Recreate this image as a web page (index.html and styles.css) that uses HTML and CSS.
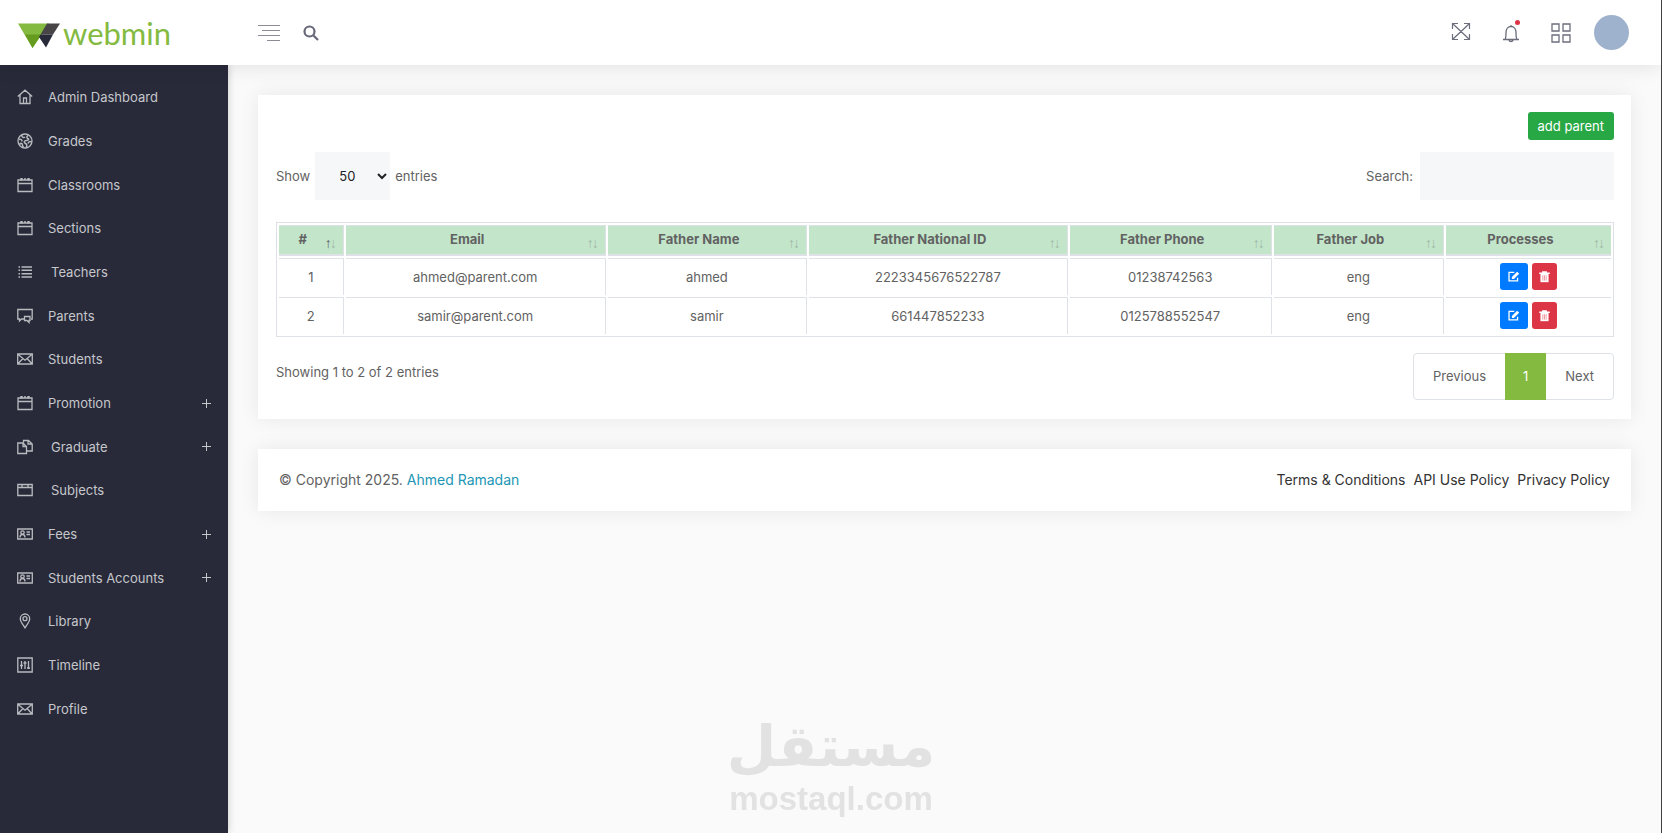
FILE: index.html
```
<!DOCTYPE html>
<html lang="en">
<head>
    <meta charset="UTF-8">
    <meta name="viewport" content="width=device-width, initial-scale=1.0">
    <title>Parents</title>
    <link rel="stylesheet" href="styles.css">
</head>
<body>
    <!-- icons shared by several items -->
    <svg class="sprite" aria-hidden="true">
        <symbol id="calendar" viewBox="0 0 16 16"><path d="M1 3h14v11.500H1zM1 6.500h14"/><path d="M4.500 1v2.500M11.500 1v2.500" stroke-width="2.400"/><path d="M7 2h2"/></symbol>
        <symbol id="envelope" viewBox="0 0 16 16"><path d="M.7 3h14.600v10H.7zM1.500 3.800l6.500 5.400 6.500-5.400M1.500 12.300l4.200-4.500M14.500 12.300l-4.200-4.500"/></symbol>
        <symbol id="idcard" viewBox="0 0 16 16"><path d="M.7 3h14.600v10H.7z"/><circle cx="5.500" cy="6.500" r="1.700"/><path d="M3 11.500c0-2 1-3 2.500-3s2.500 1 2.500 3M9.500 6H13M9.500 8.500H13"/></symbol>
        <symbol id="edit" viewBox="0 0 16 16"><path d="M9 3H2.500v10.500h10.500V9.500" fill="none" stroke="currentColor" stroke-width="1.600"/><path d="M6 11V8.500l6.500-6.500 2.500 2.500-6.500 6.500z"/></symbol>
        <symbol id="trash" viewBox="0 0 16 16"><path d="M1.500 3H5V1.500h6V3h3.500v1.800h-13z"/><path d="M3 4.500h10V15H3z"/><path d="M6 6.500v6.500M8 6.500v6.500M10 6.500v6.500" stroke="#e87883" stroke-width=".9"/></symbol>
    </svg>

    <header class="header">
        <a href="#" class="logo">
            <svg width="42" height="25" viewBox="0 0 42 25" aria-hidden="true">
                <path d="M0 .5h31L14.500 25z" fill="#84ba3f"/>
                <path d="M7 11.500h16.500L14.500 25z" fill="#659b1f"/>
                <path d="M29 .5h13L35 11.500H22.500z" fill="#484547"/>
                <path d="M22.500 11.500H35L28 24.500 21 14z" fill="#282a3a"/>
            </svg>
            <span>webmin</span>
        </a>
        <button type="button" class="icon-btn toggle" aria-label="Toggle menu">
            <svg width="22" height="18" viewBox="0 0 22 18" stroke="#8c8d94"><path d="M0 1.500h22M4 6.500h18M0 11.500h22M9 16.500h13"/></svg>
        </button>
        <button type="button" class="icon-btn" aria-label="Search">
            <svg width="16" height="16" viewBox="0 0 16 16" fill="none" stroke="#666779" stroke-width="2.200"><circle cx="6.500" cy="6.500" r="5"/><path d="M10.500 10.500l4.500 4.500"/></svg>
        </button>
        <div class="header-right">
            <button type="button" class="icon-btn" aria-label="Full screen">
                <svg width="20" height="20" viewBox="0 0 20 20" fill="none" stroke="#6c6e7c" stroke-width="1.200"><path d="M1.500 .500l17 16M18.500 .500l-17 16M1.500 6V.500H7M13 .500h5.500V6M18.500 11v5.500H13M7 16.500H1.500V11"/></svg>
            </button>
            <button type="button" class="icon-btn" aria-label="Notifications">
                <svg width="20" height="20" viewBox="0 0 20 20" fill="none" stroke="#6c6e7c" stroke-width="1.300"><path d="M2 16.500h16M4 16.500c1-1.500 1-3 1-7 0-3.500 2-6 5-6s5 2.500 5 6c0 4 0 5.500 1 7M10 2v1.500M8 17c.5 2 3.500 2 4 0"/></svg>
                <span class="dot"></span>
            </button>
            <button type="button" class="icon-btn" aria-label="Apps">
                <svg width="20" height="20" viewBox="0 0 20 20" fill="none" stroke="#6c6e7c" stroke-width="1.300"><path d="M1 1h7v7H1zM12 1h7v7h-7zM1 12h7v7H1zM12 12h7v7h-7z"/></svg>
            </button>
            <button type="button" class="avatar" aria-label="Account"></button>
        </div>
    </header>

    <div class="wrapper">
        <nav class="sidebar">
            <ul class="menu">
                <li><a href="#"><svg viewBox="0 0 16 16"><path d="M.8 7.500L8 1.200l7.200 6.300M3 6v8.500h10V6M6.500 14.500V9h3v5.500"/></svg>Admin Dashboard</a></li>
                <li><a href="#"><svg viewBox="0 0 16 16"><circle cx="8" cy="8" r="7"/><path d="M5 2c-.5 2.500 2 3 3 2M2 6.500c2-.5 3 0 3 2M11 2.500c-2 1-1 3 0 3s1 2-1.500 2-3 2-1 3 1.500 3 .5 4M14.500 9c-2-1-3 0-3.500 1.500M2.500 11.500c1-2 3-1 3 .5s1 2 1 2.500" stroke-width="1.500"/></svg>Grades</a></li>
                <li><a href="#"><svg><use href="#calendar"/></svg>Classrooms</a></li>
                <li><a href="#"><svg><use href="#calendar"/></svg>Sections</a></li>
                <li><a href="#" class="indent"><svg viewBox="0 0 16 16"><path d="M4.500 3H15M4.500 6.300H15M4.500 9.700H15M4.500 13H15M1.500 3h1.500M1.500 6.300h1.500M1.500 9.700h1.500M1.500 13h1.500" stroke-width="1.500"/></svg>Teachers</a></li>
                <li><a href="#"><svg viewBox="0 0 16 16"><path d="M7 11H4.500L2.500 13v-2H.8V1.500h14.400V11H14M7.500 8.500h5.500v4h-1v2l-2-2H7.500z"/></svg>Parents</a></li>
                <li><a href="#"><svg><use href="#envelope"/></svg>Students</a></li>
                <li><a href="#"><svg><use href="#calendar"/></svg>Promotion<span class="plus"></span></a></li>
                <li><a href="#" class="indent"><svg viewBox="0 0 16 16"><path d="M.8 4H6l3.500 3.500v7H.8zM6 4v3.500h3.500M6.500 3.500v-2h5L15.200 5v7H10M11 1.500V5h4"/></svg>Graduate<span class="plus"></span></a></li>
                <li><a href="#" class="indent"><svg viewBox="0 0 16 16"><path d="M.8 2.500h14.400v11H.8zM.8 5.500h14.400M5 2.500v3M11 2.500v3"/></svg>Subjects</a></li>
                <li><a href="#"><svg><use href="#idcard"/></svg>Fees<span class="plus"></span></a></li>
                <li><a href="#"><svg><use href="#idcard"/></svg>Students Accounts<span class="plus"></span></a></li>
                <li><a href="#"><svg viewBox="0 0 16 16"><path d="M8 14.800C5.500 11 3.300 8.500 3.300 5.700a4.700 4.700 0 0 1 9.400 0C12.700 8.500 10.500 11 8 14.800z"/><circle cx="8" cy="5.700" r="2"/></svg>Library</a></li>
                <li><a href="#"><svg viewBox="0 0 16 16"><path d="M.8 1h14.400v14H.8zM4.500 4v8M8 4v8M11.500 4v8M3 8.500h3M6.500 6h3M10 11h3"/></svg>Timeline</a></li>
                <li><a href="#"><svg><use href="#envelope"/></svg>Profile</a></li>
            </ul>
        </nav>

        <main class="content">
            <section class="card">
                <div class="card-top">
                    <button type="button" class="btn btn-success">add parent</button>
                </div>
                <div class="table-tools">
                    <label>Show
                        <select>
                            <option>10</option>
                            <option>25</option>
                            <option selected>50</option>
                            <option>100</option>
                        </select>
                        entries</label>
                    <label class="search">Search: <input type="search"></label>
                </div>
                <table class="table">
                    <colgroup>
                        <col class="col-id">
                        <col class="col-email">
                        <col class="col-name">
                        <col class="col-national">
                        <col class="col-phone">
                        <col class="col-job">
                        <col class="col-processes">
                    </colgroup>
                    <thead>
                        <tr>
                            <th class="asc">#</th>
                            <th>Email</th>
                            <th>Father Name</th>
                            <th>Father National ID</th>
                            <th>Father Phone</th>
                            <th>Father Job</th>
                            <th>Processes</th>
                        </tr>
                    </thead>
                    <tbody>
                        <tr>
                            <td>1</td>
                            <td>ahmed@parent.com</td>
                            <td>ahmed</td>
                            <td>2223345676522787</td>
                            <td>01238742563</td>
                            <td>eng</td>
                            <td>
                                <div class="actions">
                                    <button type="button" class="btn btn-edit" aria-label="Edit"><svg><use href="#edit"/></svg></button>
                                    <button type="button" class="btn btn-delete" aria-label="Delete"><svg><use href="#trash"/></svg></button>
                                </div>
                            </td>
                        </tr>
                        <tr>
                            <td>2</td>
                            <td>samir@parent.com</td>
                            <td>samir</td>
                            <td>661447852233</td>
                            <td>0125788552547</td>
                            <td>eng</td>
                            <td>
                                <div class="actions">
                                    <button type="button" class="btn btn-edit" aria-label="Edit"><svg><use href="#edit"/></svg></button>
                                    <button type="button" class="btn btn-delete" aria-label="Delete"><svg><use href="#trash"/></svg></button>
                                </div>
                            </td>
                        </tr>
                    </tbody>
                </table>
                <div class="table-bottom">
                    <p>Showing 1 to 2 of 2 entries</p>
                    <nav class="pagination">
                        <a href="#">Previous</a>
                        <a href="#" class="active">1</a>
                        <a href="#">Next</a>
                    </nav>
                </div>
            </section>

            <footer class="footer">
                <p>© Copyright 2025. <a href="#">Ahmed Ramadan</a></p>
                <div class="footer-links">
                    <a href="#">Terms &amp; Conditions</a>
                    <a href="#">API Use Policy</a>
                    <a href="#">Privacy Policy</a>
                </div>
            </footer>
        </main>
    </div>

    <div class="watermark">
        <span class="watermark-ar" lang="ar">مستقل</span>
        <span class="watermark-en">mostaql.com</span>
    </div>
</body>
</html>
```
FILE: styles.css
```
* {
    box-sizing: border-box;
}
body {
    margin: 0;
    min-height: 100vh;
    display: flex;
    flex-direction: column;
    font-family: Inter, "Open Sans", sans-serif;
    font-size: 13px;
    line-height: 20px;
    color: #626262;
    background-color: #fafafa;
    border-right: 1px solid #3f4044;
}
a {
    text-decoration: none;
}
p {
    margin: 0;
}
button {
    font-family: inherit;
    cursor: pointer;
}
.sprite {
    display: none;
}

/* header */
.header {
    position: relative;
    z-index: 2;
    display: flex;
    align-items: center;
    height: 65px;
    padding: 0 32px 0 18px;
    background-color: #fff;
    box-shadow: 0 0 20px rgba(0, 0, 0, 0.12);
}
.logo {
    display: flex;
    align-items: center;
    gap: 3px;
    width: 240px;
    padding-top: 5px;
    color: #84ba3f;
    font-family: Lato, sans-serif;
    font-size: 31px;
    line-height: 40px;
}
.logo span {
    padding-bottom: 4px;
}
.icon-btn {
    position: relative;
    display: flex;
    padding: 0;
    border: 0;
    background: none;
}
.toggle {
    margin-right: 23px;
}
.header-right {
    display: flex;
    align-items: center;
    gap: 30px;
    margin-left: auto;
}
.dot {
    position: absolute;
    top: -3px;
    right: 1px;
    width: 5px;
    height: 5px;
    border-radius: 50%;
    background-color: #dc3545;
}
.avatar {
    width: 35px;
    height: 35px;
    margin-left: -7px;
    border: 0;
    border-radius: 50%;
    background-color: #9fb2cd;
}

/* sidebar */
.wrapper {
    display: flex;
    flex: 1;
}
.sidebar {
    width: 228px;
    flex-shrink: 0;
    background-color: #282a3a;
    box-shadow: 0 0 8px rgba(0, 0, 0, 0.2);
}
.menu {
    list-style: none;
    margin: 0;
    padding: 10px 17px 0 17px;
}
.menu a {
    display: flex;
    align-items: center;
    height: 44px;
    color: #c6c7ca;
}
.menu li:nth-child(3n) a {
    height: 43px;
}
.menu svg {
    width: 16px;
    height: 16px;
    margin-right: 15px;
    fill: none;
    stroke: #b9bbbf;
    stroke-width: 1.3;
}
.menu .indent svg {
    margin-right: 18px;
}
.plus {
    width: 9px;
    height: 9px;
    margin-left: auto;
    background:
        linear-gradient(#c6c7ca, #c6c7ca) center / 9px 1px no-repeat,
        linear-gradient(#c6c7ca, #c6c7ca) center / 1px 9px no-repeat;
}

/* content */
.content {
    flex: 1;
    min-width: 0;
    padding: 30px;
}
.card, .footer {
    background-color: #fff;
    box-shadow: 0 0 20px rgba(0, 0, 0, 0.08);
}
.card {
    padding: 17px 17px 19px 18px;
    margin-bottom: 30px;
}
.card-top {
    display: flex;
    justify-content: flex-end;
    margin-bottom: 12px;
}
.btn {
    border: 0;
    border-radius: 3px;
    color: #fff;
}
.btn-success {
    height: 28px;
    padding: 0 10px;
    font-size: 13px;
    background-color: #28a745;
}
.table-tools {
    display: flex;
    justify-content: space-between;
    align-items: center;
    margin-bottom: 22px;
}
.table-tools label {
    display: flex;
    align-items: center;
    gap: 5px;
}
.table-tools .search {
    gap: 7px;
}
.table-tools select,
.table-tools input {
    height: 48px;
    border: 0;
    font-family: inherit;
    font-size: 13px;
    color: #222;
    background-color: #f6f7f8;
}
.table-tools select {
    width: 75px;
    padding-left: 20px;
}
.table-tools input {
    width: 194px;
    padding: 0 15px;
}

/* table */
.table {
    width: 100%;
    table-layout: fixed;
    border: 1px solid #dee2e6;
    border-collapse: separate;
    border-spacing: 2px;
    text-align: center;
}
.table th, .table td {
    border: 0 solid #dee2e6;
    border-width: 1px 1px 0 0;
    line-height: 20px;
}
.table th {
    position: relative;
    padding: 3px 30px 5px 14px;
    border-bottom-width: 2px;
    font-weight: 700;
    background-color: #c3e6cb;
}
.table td {
    padding: 4px 4px 5px;
}
.table th:last-child, .table td:last-child {
    border-right-width: 0;
}
.table th::before, .table th::after {
    position: absolute;
    bottom: 1px;
    font-family: "Liberation Sans", sans-serif;
    font-size: 14px;
    font-weight: 400;
    opacity: 0.35;
}
.table th::before {
    content: "\2191";
    right: 11px;
}
.table th::after {
    content: "\2193";
    right: 6px;
}
.table .asc::before {
    opacity: 1;
}
.col-id { width: 4.9%; }
.col-email { width: 19.7%; }
.col-name { width: 15.1%; }
.col-national { width: 19.6%; }
.col-phone { width: 15.3%; }
.col-job { width: 12.9%; }
.col-processes { width: 12.5%; }
.actions {
    display: flex;
    justify-content: center;
    gap: 4px;
}
.actions .btn {
    display: flex;
    align-items: center;
    justify-content: center;
    height: 27px;
    padding: 0;
}
.actions svg {
    width: 13px;
    height: 13px;
    fill: currentColor;
}
.actions .btn-edit {
    width: 28px;
    background-color: #007bff;
}
.actions .btn-delete {
    width: 25px;
    background-color: #dc3545;
}
.table-bottom {
    display: flex;
    justify-content: space-between;
    margin-top: 16px;
}
.table-bottom p {
    padding-top: 9px;
}
.pagination {
    display: flex;
    border: 1px solid #dee2e6;
    border-radius: 4px;
}
.pagination a {
    padding: 12px 19px 13px;
    color: #626262;
}
.pagination .active {
    margin: -1px 0;
    padding: 13px 18px 14px;
    color: #fff;
    background-color: #84ba3f;
}

/* footer */
.footer {
    display: flex;
    justify-content: space-between;
    padding: 21px;
    font-size: 14px;
}
.footer p a {
    color: #2196b5;
}
.footer-links {
    display: flex;
    gap: 8px;
}
.footer-links a {
    color: #333;
}

.watermark {
    position: fixed;
    left: 0;
    right: 0;
    bottom: 15px;
    display: flex;
    flex-direction: column;
    align-items: center;
    font-weight: 700;
    color: #e2e2e2;
    pointer-events: none;
}
.watermark-ar {
    font-family: "DejaVu Sans", sans-serif;
    font-size: 57px;
    line-height: 68px;
}
.watermark-en {
    font-family: "Liberation Sans", sans-serif;
    font-size: 33px;
    line-height: 38px;
}
```
